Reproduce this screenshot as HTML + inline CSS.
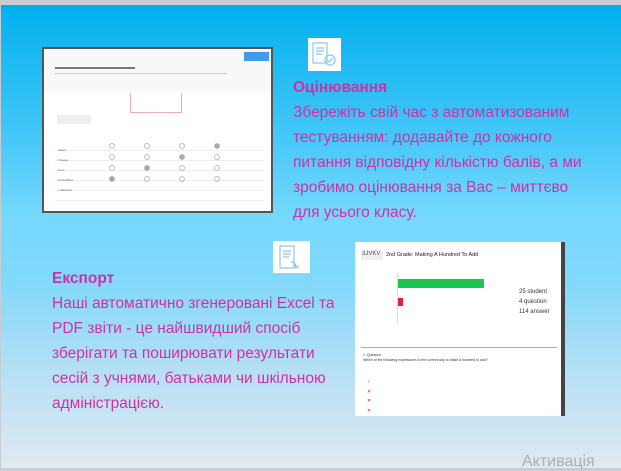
<!DOCTYPE html>
<html><head><meta charset="utf-8"><style>
*{margin:0;padding:0;box-sizing:border-box}
body{width:621px;height:471px;overflow:hidden;font-family:"Liberation Sans","DejaVu Sans",sans-serif;position:relative;background:#c9ccd1}
#s{position:absolute;left:1px;top:5px;width:620px;height:463px;background:linear-gradient(180deg,#02b0ef 0%,#3cc4f7 25%,#74d8fd 45%,#82d9fc 60%,#b8e0f4 80%,#e0e9f1 100%)}
.t{position:absolute;color:#d22fa5;font-size:15.5px;line-height:25px;white-space:nowrap}
.t b{font-size:15.5px}
.a{position:absolute}
.ic{position:absolute;background:#fff}
</style></head><body>
<div id="s">
<!-- left screenshot -->
<div class="a" style="left:41px;top:42px;width:231px;height:166px;background:#555;padding:2px">
 <div style="position:relative;width:100%;height:100%;background:#fff;font-size:3px;color:#666">
  <div class="a" style="left:0;top:0;width:100%;height:43px;background:#f7f8fa"></div>
  <div class="a" style="left:200px;top:3px;width:25px;height:9px;background:#3f9ae8"></div>
  <div class="a" style="left:11px;top:24px;width:172px;height:1px;background:#ccc"></div>
  <div class="a" style="left:11px;top:18px;width:80px;height:2px;background:#777"></div>
  <div class="a" style="left:86px;top:44px;width:52px;height:20px;border:1px solid #e8b0b0;border-top:none"></div>
  <div class="a" style="left:13px;top:66px;width:34px;height:9px;background:#eee"></div>
  <div class="a" style="left:11px;top:92px;width:210px;height:62px;background:
   repeating-linear-gradient(180deg,transparent 0 9px,#eee 9px 10px)"></div>
  <div class="a" style="left:14px;top:96px;line-height:10px">Salad<br>Cheese<br>Ham<br>Roast Beef<br>+ Add item</div>
  <svg class="a" style="left:0;top:90px" width="230" height="50">
   <g fill="none" stroke="#aaa" stroke-width="0.7">
    <circle cx="68" cy="7" r="2.5"/><circle cx="103" cy="7" r="2.5"/><circle cx="138" cy="7" r="2.5"/><circle cx="173" cy="7" r="2.5" fill="#aaa"/>
    <circle cx="68" cy="18" r="2.5"/><circle cx="103" cy="18" r="2.5"/><circle cx="138" cy="18" r="2.5" fill="#aaa"/><circle cx="173" cy="18" r="2.5"/>
    <circle cx="68" cy="29" r="2.5"/><circle cx="103" cy="29" r="2.5" fill="#aaa"/><circle cx="138" cy="29" r="2.5"/><circle cx="173" cy="29" r="2.5"/>
    <circle cx="68" cy="40" r="2.5" fill="#aaa"/><circle cx="103" cy="40" r="2.5"/><circle cx="138" cy="40" r="2.5"/><circle cx="173" cy="40" r="2.5"/>
   </g></svg>
 </div>
</div>
<div class="ic" style="left:307px;top:33px;width:33px;height:33px">
 <svg width="33" height="33"><g fill="none" stroke="#8cc8ee" stroke-width="1.2"><path d="M5 5h14v20H5z"/><path d="M8 10h8M8 13h8M8 16h6"/><circle cx="22" cy="22" r="5"/><path d="M19.5 22l2 2 3-4"/></g></svg>
</div>
<div class="t" style="left:292px;top:70px"><b>Оцінювання</b><br>Збережіть свій час з автоматизованим<br>тестуванням: додавайте до кожного<br>питання відповідну кількістю балів, а ми<br>зробимо оцінювання за Вас – миттєво<br>для усього класу.</div>

<div class="ic" style="left:272px;top:236px;width:37px;height:32px">
 <svg width="37" height="32"><g fill="none" stroke="#8cc8ee" stroke-width="1.2"><path d="M7 5h14v22H7z"/><path d="M10 10h8M10 13h8M10 16h6"/><path d="M18 21c3 0 5 2 5 5M21 24l2 3 3-2"/></g></svg>
</div>
<div class="t" style="left:51px;top:261px"><b>Експорт</b><br>Наші автоматично згенеровані Excel та<br>PDF звіти - це найшвидший спосіб<br>зберігати та поширювати результати<br>сесій з учнями, батьками чи шкільною<br>адміністрацією.</div>

<!-- right screenshot -->
<div class="a" style="left:354px;top:237px;width:210px;height:174px;background:#fff;border-right:4px solid #444">
 <div class="a" style="left:6px;top:9px;width:22px;height:9px;background:#eee;font-size:6px;color:#555;padding-left:1px">3JVKV</div>
 <div class="a" style="left:31px;top:10px;font-size:5.5px;color:#222">2nd Grade: Making A Hundred To Add</div>
 <div class="a" style="left:42px;top:31px;width:1px;height:50px;background:#ddd"></div>
 <div class="a" style="left:43px;top:37px;width:86px;height:9px;background:#1dc44f"></div>
 <div class="a" style="left:43px;top:56px;width:5px;height:8px;background:#e8203a"></div>
 <div class="a" style="left:164px;top:45px;font-size:6px;line-height:10px;color:#333">25 student<br>4 question<br>114 answer</div>
 <div class="a" style="left:6px;top:105px;width:196px;height:1px;background:#aaa"></div>
 <div class="a" style="left:8px;top:111px;font-size:3.5px;line-height:5px;color:#333">1. Question<br>Which of the following expressions is the correct way to make a hundred to add?</div>
 <div class="a" style="left:12px;top:136px;font-size:5px;line-height:9.5px;color:#d22"><span style="color:#3b3">✓</span><br>✕<br>✕<br>✕</div>
</div>
</div>
<div class="a" style="left:522px;top:453px;font-size:16px;color:#a8b0b8">Активація</div>
</body></html>
